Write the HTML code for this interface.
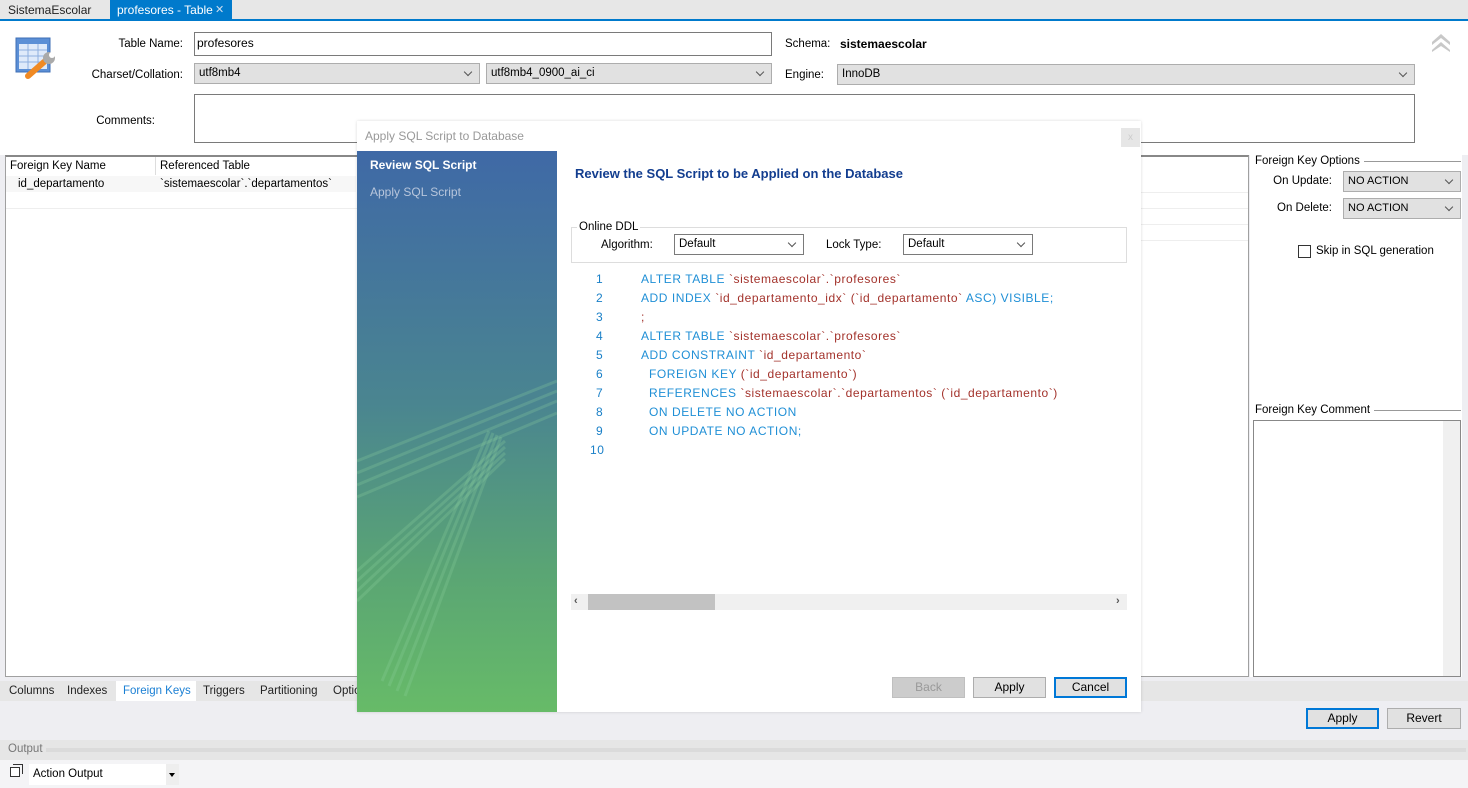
<!DOCTYPE html>
<html><head><meta charset="utf-8"><style>
*{box-sizing:border-box;margin:0;padding:0}
body{width:1468px;height:788px;position:relative;overflow:hidden;background:#eeeef2;font-family:"Liberation Sans",Arial,sans-serif;font-size:12px;color:#000}
.a{position:absolute}
.lbl{position:absolute;font-size:11.5px;text-align:right}
.combo{position:absolute;background:#e1e1e1;border:1px solid #adadad;font-size:11.5px;padding:0 4px;line-height:19px;height:21px}
.combo:after{content:"";position:absolute;right:8px;top:5px;width:5px;height:5px;border-right:1px solid #555;border-bottom:1px solid #555;transform:rotate(45deg)}
.wcombo{background:#fff;border:1px solid #7a7a7a}
.btn{position:absolute;background:#e1e1e1;border:1px solid #adadad;text-align:center;font-size:12px;line-height:19px;height:21px}
.kw{color:#1f8fd6}.id{color:#a3322b}.num{color:#1a80c8}
.code div{position:absolute;font-size:12px;white-space:pre;letter-spacing:.55px}
</style></head><body>
<!-- top tabs -->
<div class="a" style="left:0;top:0;width:1468px;height:19px;background:#e7e7e7"></div>
<div class="a" style="left:8px;top:3px;font-size:12px;color:#222">SistemaEscolar</div>
<div class="a" style="left:110px;top:0;width:122px;height:20px;background:#007acc;color:#fff;font-size:12px;padding:3px 7px;white-space:nowrap">profesores - Table</div>
<div class="a" style="left:215px;top:3px;color:#cde;font-size:11px">✕</div>
<div class="a" style="left:0;top:19px;width:1468px;height:2px;background:#007acc"></div>
<div class="a" style="left:0;top:21px;width:1468px;height:134px;background:#fff"></div>
<!-- icon -->
<svg class="a" style="left:14px;top:36px" width="46" height="44"><rect x="2" y="2" width="34" height="34" fill="#5b8fd6" stroke="#3f6fb6"/><rect x="5" y="8" width="28" height="25" fill="#dfeafa"/><g stroke="#8fb0e0"><line x1="5" y1="14" x2="33" y2="14"/><line x1="5" y1="20" x2="33" y2="20"/><line x1="5" y1="26" x2="33" y2="26"/><line x1="14" y1="8" x2="14" y2="33"/><line x1="24" y1="8" x2="24" y2="33"/></g><path d="M14 40 L30 26" stroke="#f08a24" stroke-width="6" stroke-linecap="round"/><circle cx="35" cy="22" r="6" fill="#aaa"/><circle cx="38" cy="19" r="3" fill="#fff"/></svg>
<div class="lbl" style="left:90px;top:38px;width:93px">Table Name:</div>
<div class="a" style="left:194px;top:32px;width:578px;height:24px;border:1px solid #7a7a7a;background:#fff;padding:3px 2px;font-size:12px">profesores</div>
<div class="lbl" style="left:80px;top:69px;width:103px">Charset/Collation:</div>
<div class="combo" style="left:194px;top:63px;width:286px">utf8mb4</div>
<div class="combo" style="left:486px;top:63px;width:286px">utf8mb4_0900_ai_ci</div>
<div class="lbl" style="left:80px;top:115px;width:75px">Comments:</div>
<div class="a" style="left:194px;top:94px;width:1221px;height:49px;border:1px solid #7a7a7a;background:#fff"></div>
<div class="a" style="left:785px;top:38px;font-size:11.5px">Schema:</div>
<div class="a" style="left:840px;top:37px;font-size:12px;font-weight:bold">sistemaescolar</div>
<div class="a" style="left:785px;top:69px;font-size:11.5px">Engine:</div>
<div class="combo" style="left:837px;top:64px;width:578px">InnoDB</div>
<svg class="a" style="left:1430px;top:32px" width="22" height="20"><path d="M2 10 L11 2 L20 10 L20 13 L11 6 L2 13Z M2 18 L11 10 L20 18 L20 20 L11 14 L2 20Z" fill="#c8c8c8"/></svg>
<!-- table panel -->
<div class="a" style="left:5px;top:155px;width:1244px;height:522px;background:#fff;border:1px solid #a0a0a0;border-top:2px solid #888"></div>
<div class="a" style="left:10px;top:160px;font-size:11.5px">Foreign Key Name</div>
<div class="a" style="left:155px;top:157px;width:1px;height:18px;background:#ddd"></div>
<div class="a" style="left:160px;top:160px;font-size:11.5px">Referenced Table</div>
<div class="a" style="left:6px;top:176px;width:350px;height:16px;background:#f7f7f7"></div>
<div class="a" style="left:18px;top:178px;font-size:11.5px">id_departamento</div>
<div class="a" style="left:160px;top:178px;font-size:11.5px">`sistemaescolar`.`departamentos`</div>
<div class="a" style="left:6px;top:208px;width:1242px;height:1px;background:#eee"></div>
<div class="a" style="left:1140px;top:192px;width:108px;height:1px;background:#eee"></div>
<div class="a" style="left:1140px;top:224px;width:108px;height:1px;background:#eee"></div>
<div class="a" style="left:1140px;top:240px;width:108px;height:1px;background:#eee"></div>
<!-- right panel -->
<div class="a" style="left:1250px;top:155px;width:212px;height:522px;background:#fff"></div>
<div class="a" style="left:1255px;top:155px;font-size:11.5px;background:#fff;padding-right:4px;z-index:1">Foreign Key Options</div>
<div class="a" style="left:1358px;top:161px;width:103px;height:1px;background:#999"></div>
<div class="lbl" style="left:1260px;top:175px;width:72px">On Update:</div>
<div class="combo" style="left:1343px;top:171px;width:118px;font-size:11px">NO ACTION</div>
<div class="lbl" style="left:1260px;top:202px;width:72px">On Delete:</div>
<div class="combo" style="left:1343px;top:198px;width:118px;font-size:11px">NO ACTION</div>
<div class="a" style="left:1298px;top:245px;width:13px;height:13px;border:1px solid #333;background:#fff"></div>
<div class="a" style="left:1316px;top:245px;font-size:11.5px">Skip in SQL generation</div>
<div class="a" style="left:1255px;top:404px;font-size:11.5px;background:#fff;padding-right:4px;z-index:1">Foreign Key Comment</div>
<div class="a" style="left:1370px;top:410px;width:91px;height:1px;background:#999"></div>
<div class="a" style="left:1253px;top:420px;width:208px;height:257px;border:1px solid #888;background:#fff"></div>
<div class="a" style="left:1443px;top:421px;width:17px;height:255px;background:#f0f0f0"></div>
<!-- bottom tabs -->
<div class="a" style="left:0;top:681px;width:1468px;height:20px;background:#e6e6e6"></div>
<div class="a" style="left:9px;top:685px;font-size:11.5px;color:#222">Columns</div>
<div class="a" style="left:67px;top:685px;font-size:11.5px;color:#222">Indexes</div>
<div class="a" style="left:116px;top:681px;width:80px;height:20px;background:#fff"></div>
<div class="a" style="left:123px;top:685px;font-size:11.5px;color:#1a7fd4">Foreign Keys</div>
<div class="a" style="left:203px;top:685px;font-size:11.5px;color:#222">Triggers</div>
<div class="a" style="left:260px;top:685px;font-size:11.5px;color:#222">Partitioning</div>
<div class="a" style="left:333px;top:685px;font-size:11.5px;color:#222">Options</div>
<div class="btn" style="left:1306px;top:708px;width:73px;border:2px solid #0078d7;line-height:17px">Apply</div>
<div class="btn" style="left:1387px;top:708px;width:74px">Revert</div>
<div class="a" style="left:0;top:740px;width:1468px;height:20px;background:#e6e6e6"></div>
<div class="a" style="left:8px;top:743px;font-size:11.5px;color:#777">Output</div>
<div class="a" style="left:46px;top:748px;width:1420px;height:4px;background-image:radial-gradient(#bbb 40%,transparent 45%);background-size:2px 2px"></div>
<div class="a" style="left:0;top:760px;width:1468px;height:28px;background:#f4f4f6"></div>
<div class="a" style="left:10px;top:767px;width:10px;height:10px;border:1px solid #333;background:#fff"></div>
<div class="a" style="left:13px;top:764px;width:10px;height:10px;border:1px solid #333;border-left:none;border-bottom:none"></div>
<div class="a" style="left:29px;top:764px;width:150px;height:21px;background:#fff;padding:0 4px;line-height:21px;font-size:11.5px">Action Output</div>
<div class="a" style="left:166px;top:764px;width:13px;height:21px;background:#eee"></div>
<div class="a" style="left:169px;top:773px;border:3px solid transparent;border-top:4px solid #000"></div>
<!-- dialog -->
<div class="a" style="left:357px;top:121px;width:784px;height:591px;background:#fff;box-shadow:0 0 3px rgba(0,0,0,.15)"></div>
<div class="a" style="left:365px;top:129px;font-size:12px;color:#999">Apply SQL Script to Database</div>
<div class="a" style="left:1121px;top:128px;width:19px;height:19px;background:#e6e6e6;color:#ccc;font-size:10px;text-align:center;line-height:19px">x</div>
<div class="a" style="left:357px;top:151px;width:200px;height:561px;background:linear-gradient(#3f69a6 0%,#4a8590 45%,#5aa574 75%,#67bb68 100%);overflow:hidden">
<svg width="200" height="561" style="position:absolute;left:0;top:0"><g stroke="#8fd4a0" stroke-opacity=".25" stroke-width="3" fill="none">
<line x1="0" y1="310" x2="200" y2="230"/><line x1="0" y1="322" x2="200" y2="240"/><line x1="0" y1="334" x2="200" y2="250"/><line x1="0" y1="346" x2="200" y2="262"/>
<line x1="0" y1="420" x2="148" y2="290"/><line x1="0" y1="430" x2="148" y2="296"/><line x1="0" y1="440" x2="148" y2="302"/><line x1="0" y1="450" x2="148" y2="308"/>
<line x1="25" y1="530" x2="132" y2="280"/><line x1="32" y1="535" x2="136" y2="282"/><line x1="40" y1="540" x2="140" y2="284"/><line x1="48" y1="545" x2="144" y2="286"/></g></svg>
<div class="a" style="left:13px;top:7px;color:#fff;font-weight:bold;font-size:12px">Review SQL Script</div>
<div class="a" style="left:13px;top:34px;color:#b8c6dc;font-size:12px">Apply SQL Script</div>
</div>
<div class="a" style="left:575px;top:166px;font-size:13px;font-weight:bold;color:#123d8f">Review the SQL Script to be Applied on the Database</div>
<div class="a" style="left:571px;top:227px;width:556px;height:36px;border:1px solid #ddd"></div>
<div class="a" style="left:577px;top:221px;background:#fff;padding:0 2px;font-size:11.5px">Online DDL</div>
<div class="a" style="left:601px;top:239px;font-size:11.5px">Algorithm:</div>
<div class="combo wcombo" style="left:674px;top:234px;width:130px">Default</div>
<div class="a" style="left:826px;top:239px;font-size:11.5px">Lock Type:</div>
<div class="combo wcombo" style="left:903px;top:234px;width:130px">Default</div>
<div class="code">
<div class="num" style="left:596px;top:272px">1</div><div style="left:641px;top:272px"><span class="kw">ALTER TABLE </span><span class="id">`sistemaescolar`.`profesores`</span></div>
<div class="num" style="left:596px;top:291px">2</div><div style="left:641px;top:291px"><span class="kw">ADD INDEX </span><span class="id">`id_departamento_idx` (`id_departamento` </span><span class="kw">ASC) VISIBLE;</span></div>
<div class="num" style="left:596px;top:310px">3</div><div style="left:641px;top:310px" class="id">;</div>
<div class="num" style="left:596px;top:329px">4</div><div style="left:641px;top:329px"><span class="kw">ALTER TABLE </span><span class="id">`sistemaescolar`.`profesores`</span></div>
<div class="num" style="left:596px;top:348px">5</div><div style="left:641px;top:348px"><span class="kw">ADD CONSTRAINT </span><span class="id">`id_departamento`</span></div>
<div class="num" style="left:596px;top:367px">6</div><div style="left:649px;top:367px"><span class="kw">FOREIGN KEY </span><span class="id">(`id_departamento`)</span></div>
<div class="num" style="left:596px;top:386px">7</div><div style="left:649px;top:386px"><span class="kw">REFERENCES </span><span class="id">`sistemaescolar`.`departamentos` (`id_departamento`)</span></div>
<div class="num" style="left:596px;top:405px">8</div><div style="left:649px;top:405px" class="kw">ON DELETE NO ACTION</div>
<div class="num" style="left:596px;top:424px">9</div><div style="left:649px;top:424px" class="kw">ON UPDATE NO ACTION;</div>
<div class="num" style="left:590px;top:443px">10</div>
</div>
<div class="a" style="left:571px;top:594px;width:556px;height:16px;background:#f0f0f0"></div>
<div class="a" style="left:588px;top:594px;width:127px;height:16px;background:#c2c2c2"></div>
<div class="a" style="left:574px;top:595px;font-size:11px;color:#555;font-weight:bold">‹</div>
<div class="a" style="left:1116px;top:595px;font-size:11px;color:#555;font-weight:bold">›</div>
<div class="btn" style="left:892px;top:677px;width:73px;background:#ccc;border-color:#bfbfbf;color:#999">Back</div>
<div class="btn" style="left:973px;top:677px;width:73px">Apply</div>
<div class="btn" style="left:1054px;top:677px;width:73px;border:2px solid #0078d7;line-height:17px">Cancel</div>
</body></html>
